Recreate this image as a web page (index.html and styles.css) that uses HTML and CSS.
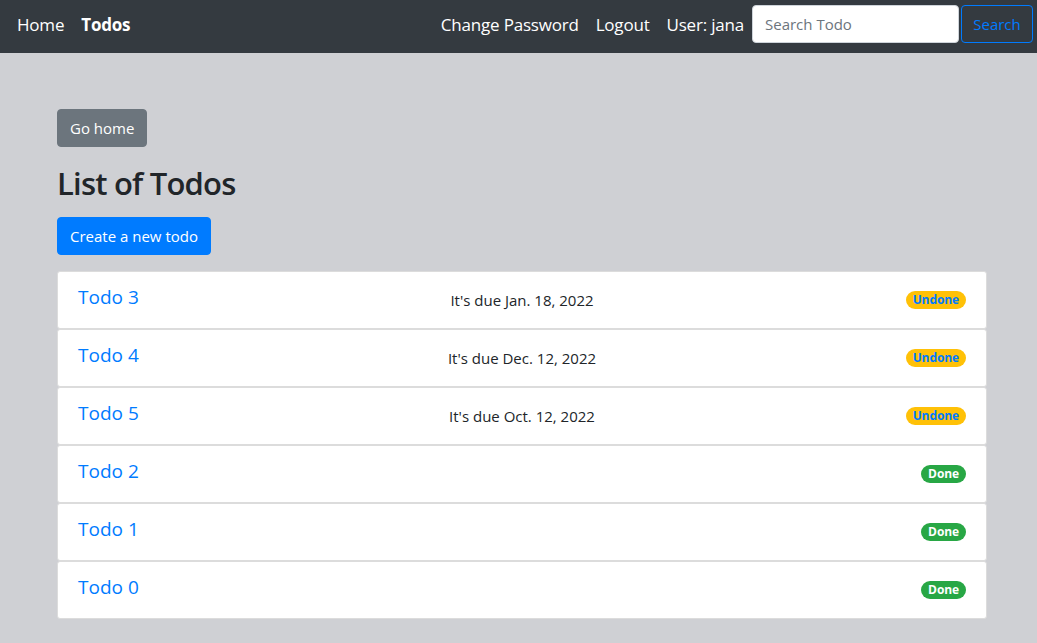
FILE: index.html
```html
<!DOCTYPE html>
<html>
<head>
<meta charset="utf-8">
<link rel="stylesheet" href="styles.css">
</head>
<body>
<nav class="navbar">
  <div class="nav-left">
    <a class="nav-link" href="#">Home</a>
    <a class="nav-link active" href="#">Todos</a>
  </div>
  <div class="nav-right">
    <a class="nav-link" href="#">Change Password</a>
    <a class="nav-link" href="#">Logout</a>
    <span class="nav-user">User: jana</span>
    <form class="search-form">
      <input class="search-input" type="text" placeholder="Search Todo">
      <button class="search-btn" type="button">Search</button>
    </form>
  </div>
</nav>
<main class="container">
  <a class="btn btn-secondary" href="#">Go home</a>
  <h2 class="title">List of Todos</h2>
  <a class="btn btn-primary" href="#">Create a new todo</a>
  <ul class="todo-list">
    <li class="todo-item"><a class="todo-name" href="#">Todo 3</a><span class="todo-due">It's due Jan. 18, 2022</span><span class="badge badge-undone">Undone</span></li>
    <li class="todo-item"><a class="todo-name" href="#">Todo 4</a><span class="todo-due">It's due Dec. 12, 2022</span><span class="badge badge-undone">Undone</span></li>
    <li class="todo-item"><a class="todo-name" href="#">Todo 5</a><span class="todo-due">It's due Oct. 12, 2022</span><span class="badge badge-undone">Undone</span></li>
    <li class="todo-item"><a class="todo-name" href="#">Todo 2</a><span class="todo-due"></span><span class="badge badge-done">Done</span></li>
    <li class="todo-item"><a class="todo-name" href="#">Todo 1</a><span class="todo-due"></span><span class="badge badge-done">Done</span></li>
    <li class="todo-item"><a class="todo-name" href="#">Todo 0</a><span class="todo-due"></span><span class="badge badge-done">Done</span></li>
  </ul>
</main>
</body>
</html>
```

FILE: styles.css
```css
* { box-sizing: border-box; }
html, body { margin: 0; padding: 0; }
body {
  background: #cfd0d4;
  font-family: "Open Sans", "Noto Sans", sans-serif;
  color: #212529;
  font-size: 16px;
  height: 643px;
  overflow: hidden;
}
a { text-decoration: none; }

.navbar {
  height: 53px;
  background: #343a40;
  display: flex;
  align-items: center;
  justify-content: space-between;
  padding: 0 4px 5px 17px;
}
.nav-left, .nav-right { display: flex; align-items: center; }
.nav-link {
  color: #fff;
  font-size: 17px;
  letter-spacing: -0.2px;
  margin-right: 17px;
}
.nav-left .nav-link:last-child { margin-right: 0; }
.nav-link.active { font-weight: 700; }
.nav-user {
  color: #fff;
  font-size: 17px;
  letter-spacing: -0.2px;
  margin-right: 8px;
}
.search-form { display: flex; align-items: center; }
.search-input {
  width: 207px;
  height: 38px;
  border: 1px solid #ced4da;
  border-radius: 4px;
  padding: 0 12px;
  font-family: inherit;
  font-size: 15px;
  color: #495057;
  background: #fff;
}
.search-input::placeholder { color: #6c757d; }
.search-btn {
  margin-left: 2px;
  height: 38px;
  width: 72px;
  border: 1px solid #007bff;
  border-radius: 4px;
  background: transparent;
  color: #007bff;
  font-family: inherit;
  font-size: 15px;
  padding: 0;
}

.container {
  padding: 56px 50px 0 57px;
  display: flex;
  flex-direction: column;
  align-items: flex-start;
}
.btn {
  display: inline-block;
  height: 38px;
  line-height: 36px;
  padding: 0 12px;
  border-radius: 4px;
  border: 1px solid transparent;
  color: #fff;
  font-size: 15px;
}
.btn-secondary { background: #6c757d; border-color: #6c757d; }
.btn-primary { background: #007bff; border-color: #007bff; }
.title {
  font-size: 31px;
  font-weight: 600;
  margin: 16px 0 14px;
  line-height: 40px;
  letter-spacing: -0.8px;
}
.todo-list {
  list-style: none;
  margin: 16px 0 0;
  padding: 0;
  width: 100%;
}
.todo-item {
  height: 58px;
  background: #fff;
  border: 1px solid #dcdcdc;
  border-radius: 3px;
  display: grid;
  grid-template-columns: 1fr auto 1fr;
  align-items: start;
  padding: 0 20px;
}
.todo-name {
  justify-self: start;
  color: #007bff;
  font-size: 19px;
  margin-top: 12px;
  line-height: 26px;
  white-space: nowrap;
}
.todo-due {
  text-align: center;
  font-size: 15px;
  margin-top: 17px;
  line-height: 22px;
}
.badge {
  justify-self: end;
  margin-top: 19px;
  height: 18px;
  line-height: 18px;
  padding: 0 7px;
  border-radius: 10px;
  font-size: 12px;
  font-weight: 700;
  letter-spacing: -0.1px;
}
.badge-undone { background: #ffc107; color: #007bff; }
.badge-done { background: #28a745; color: #fff; }
```
